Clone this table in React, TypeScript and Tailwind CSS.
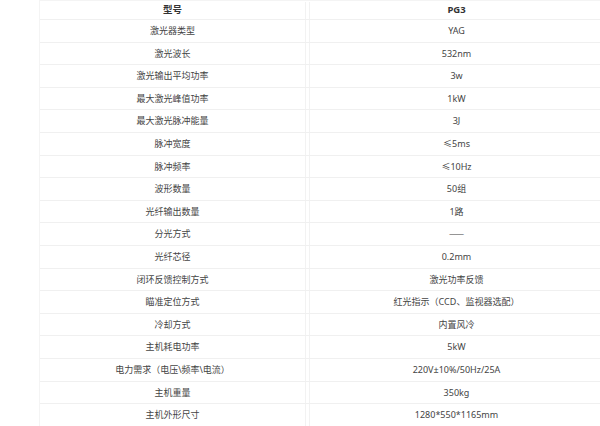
const rows: [string, string][] = [
  ['激光器类型', 'YAG'],
  ['激光波长', '532nm'],
  ['激光输出平均功率', '3w'],
  ['最大激光峰值功率', '1kW'],
  ['最大激光脉冲能量', '3J'],
  ['脉冲宽度', '≤5ms'],
  ['脉冲频率', '≤10Hz'],
  ['波形数量', '50组'],
  ['光纤输出数量', '1路'],
  ['分光方式', '——'],
  ['光纤芯径', '0.2mm'],
  ['闭环反馈控制方式', '激光功率反馈'],
  ['瞄准定位方式', '红光指示（CCD、监视器选配）'],
  ['冷却方式', '内置风冷'],
  ['主机耗电功率', '5kW'],
  ['电力需求（电压\\频率\\电流）', '220V±10%/50Hz/25A'],
  ['主机重量', '350kg'],
  ['主机外形尺寸', '1280*550*1165mm'],
];

function Row({ label, value, head }: { label: string; value: string; head?: boolean }) {
  const cell = head ? 'font-bold text-[#333] text-[9.5px]' : '';
  return (
    <div className={`flex border-b border-[#f0f0f0] ${head ? 'h-[19px] pt-[1px]' : 'h-[22.6px]'}`}>
      <div className={`w-[266px] flex items-center justify-center border-r border-[#f2f2f2] ${cell}`}>
        {label}
      </div>
      <div className="w-[3px]" />
      <div className={`flex-1 flex items-center justify-center border-l border-[#f2f2f2] ${cell}`}>
        {value === '——' ? (
          <span style={{ fontFamily: '"Noto Sans CJK SC", sans-serif' }}>{value}</span>
        ) : (
          value
        )}
      </div>
    </div>
  );
}

export default function App() {
  return (
    <div className="w-[600px] h-[426px] overflow-hidden bg-white">
      <div
        className="ml-[39px] w-[564px] border-t border-l border-[#f4f4f4] text-[9px] text-[#444]"
        style={{ fontFamily: '"Noto Sans", "Noto Sans CJK SC", sans-serif' }}
      >
        <Row label="型号" value="PG3" head />
        {rows.map(([l, v]) => (
          <Row key={l} label={l} value={v} />
        ))}
      </div>
    </div>
  );
}
